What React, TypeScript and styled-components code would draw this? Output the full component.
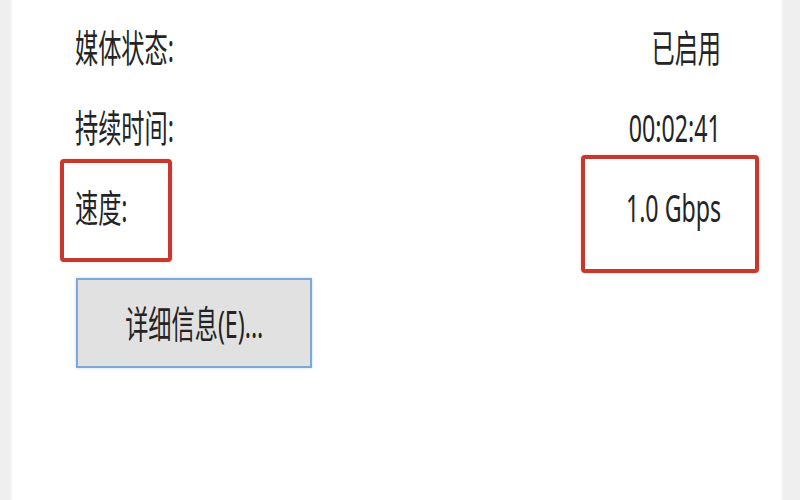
import React from 'react'
import styled, { createGlobalStyle } from 'styled-components'

const GlobalStyle = createGlobalStyle`
  html, body {
    margin: 0;
    padding: 0;
    background: #ffffff;
  }
  #root {
    width: 800px;
    height: 500px;
    overflow: hidden;
  }
`

const Window = styled.div`
  display: flex;
  width: 800px;
  height: 500px;
  font-family: 'Noto Sans', 'Noto Sans CJK SC', sans-serif;
  color: #242424;
`

const SideStrip = styled.div<{ $width: number; $edge: 'left' | 'right' }>`
  flex: 0 0 ${({ $width }) => $width}px;
  background: #efefef;
  border-${({ $edge }) => ($edge === 'left' ? 'right' : 'left')}: 2px solid #f6f6f6;
`

const Panel = styled.div`
  flex: 1;
  display: flex;
  flex-direction: column;
  padding: 7px 60px 0 63px;
  background: #ffffff;
`

const Row = styled.div`
  position: relative;
  display: flex;
  align-items: center;
  justify-content: space-between;
  height: 80px;
`

const Text = styled.span<{ $align?: 'left' | 'right' | 'center' }>`
  display: inline-block;
  font-size: 38px;
  line-height: 1;
  white-space: nowrap;
  transform: scaleX(0.61);
  transform-origin: ${({ $align }) => $align || 'left'} center;
`

const Mark = styled.div<{ $side: 'left' | 'right'; $offset: number; $top: number; $width: number; $height: number }>`
  position: absolute;
  ${({ $side, $offset }) => `${$side}: ${$offset}px;`}
  top: ${({ $top }) => $top}px;
  width: ${({ $width }) => $width}px;
  height: ${({ $height }) => $height}px;
  box-sizing: border-box;
  border: 4px solid #c9382c;
  border-radius: 4px;
  box-shadow: 0 0 2px rgba(201, 56, 44, 0.35);
  pointer-events: none;
`

const Actions = styled.div`
  display: flex;
  padding-top: 31px;
  margin-left: 1px;
`

const DetailButton = styled.button`
  display: flex;
  align-items: center;
  justify-content: center;
  width: 236px;
  height: 90px;
  box-sizing: border-box;
  background: #e1e1e1;
  border: 2px solid #7ea9d6;
  box-shadow: 0 0 3px rgba(126, 169, 214, 0.45);
  border-radius: 0;
  padding: 0;
  color: #242424;
  font-family: inherit;
`

const rows = [
  { label: '媒体状态:', value: '已启用' },
  { label: '持续时间:', value: '00:02:41' },
  { label: '速度:', value: '1.0 Gbps', marked: true },
]

const App = () => {
  return (
    <>
      <GlobalStyle />
      <Window>
        <SideStrip $width={10} $edge="left" />
        <Panel>
          {rows.map((row) => (
            <Row key={row.label}>
              <Text>{row.label}</Text>
              <Text $align="right">{row.value}</Text>
              {row.marked && (
                <>
                  <Mark $side="left" $offset={-15} $top={-8} $width={112} $height={103} />
                  <Mark $side="right" $offset={-38} $top={-12} $width={178} $height={118} />
                </>
              )}
            </Row>
          ))}
          <Actions>
            <DetailButton>
              <Text $align="center">详细信息(E)...</Text>
            </DetailButton>
          </Actions>
        </Panel>
        <SideStrip $width={17} $edge="right" />
      </Window>
    </>
  )
}

export default App
